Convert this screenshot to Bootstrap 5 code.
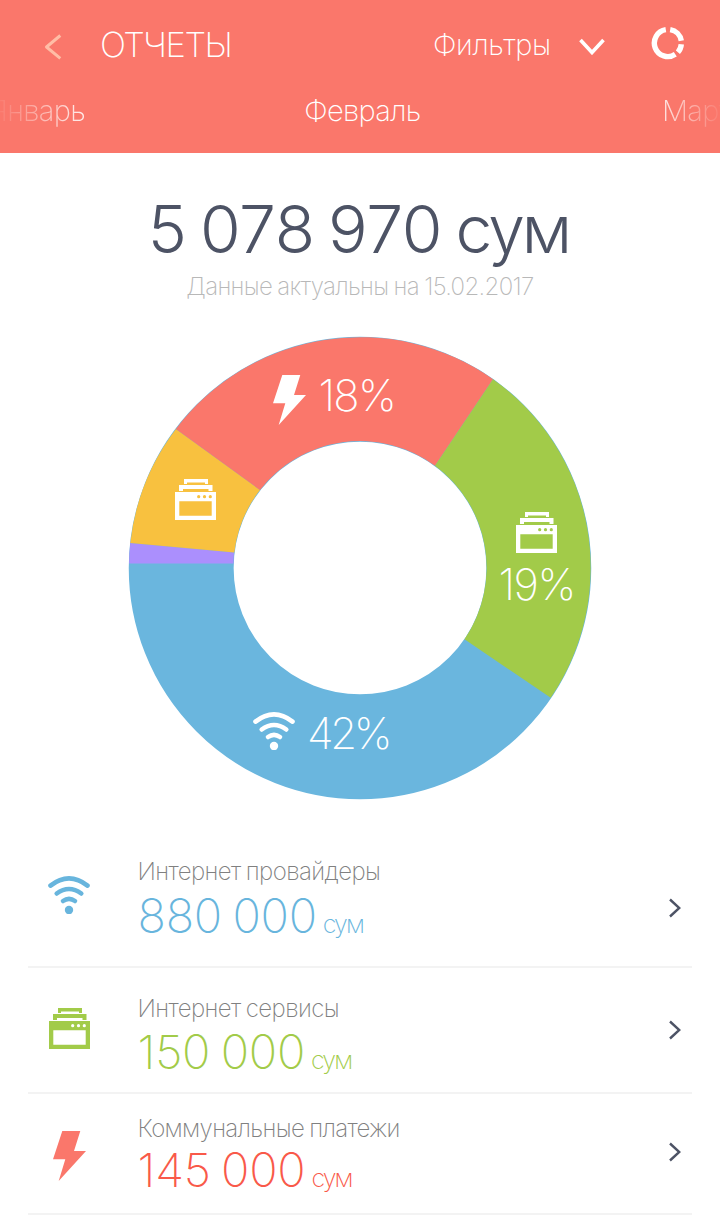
<!DOCTYPE html>
<html lang="ru">
<head>
<meta charset="utf-8">
<meta name="viewport" content="width=device-width, initial-scale=1">
<title>Отчеты</title>
<link rel="stylesheet" href="https://cdn.jsdelivr.net/npm/bootstrap@5.3.0/dist/css/bootstrap.min.css">
<style>
body{font-family:Inter,"Open Sans",sans-serif;font-weight:245;background:#fff;color:#4d5365;overflow:hidden}
svg{display:block}
.topbar{height:153px;background:#fa776b}
.title-row{height:89px;padding-left:44px;padding-right:35px}
.back-btn{margin-top:4px}
.page-title{font-size:34.5px;line-height:1;font-weight:245;letter-spacing:-1.5px;margin-left:38px;padding-top:2px}
.filters{font-size:29px;line-height:1;letter-spacing:-.3px}
.filters-arrow{margin:4px 46px 0 28px}
.months{height:43px;font-size:29px;line-height:43px;letter-spacing:-.65px}
.month-side{width:120px;overflow:hidden;white-space:nowrap}
.month-current{padding-left:5px}
.month-prev{direction:rtl;padding-right:35px;-webkit-mask-image:linear-gradient(90deg,rgba(0,0,0,.05),rgba(0,0,0,.85) 80px);mask-image:linear-gradient(90deg,rgba(0,0,0,.05),rgba(0,0,0,.85) 80px)}
.month-next{padding-left:62px;-webkit-mask-image:linear-gradient(270deg,rgba(0,0,0,.05),rgba(0,0,0,.85) 60px);mask-image:linear-gradient(270deg,rgba(0,0,0,.05),rgba(0,0,0,.85) 60px)}
.total{font-size:66px;line-height:81px;font-weight:300;letter-spacing:-.3px;word-spacing:-5px;padding-top:36px;padding-right:3px}
.total-unit{letter-spacing:-3px}
.updated{font-size:24px;line-height:32px;color:#b8b8b8;letter-spacing:-.65px;word-spacing:-1px;padding-top:1px;margin-bottom:-1px}
.chart{margin:34px auto 0}
.chart text{font-size:43.5px;fill:#fff}
.entry{margin:0 28px;border-bottom:2px solid #f3f3f3}
.entry-icon{width:42px;margin-left:20px}
.entry-text{margin-left:47.5px}
.entry-label{font-size:24px;line-height:32px;color:#808080;letter-spacing:-.58px;word-spacing:-1px}
.entry-3 .entry-label{letter-spacing:-.65px}
.entry-sum{font-size:47px;word-spacing:-2.5px;letter-spacing:-.25px}
.unit{font-size:25px;letter-spacing:-1.9px;margin-left:6px}
.entry-arrow{margin-right:11.5px}
.entry-1{height:168px;padding-top:56px}
.entry-1 .entry-icon{padding-top:20px}
.entry-1 .entry-sum{line-height:56px;color:#68b5dd}
.entry-1 .entry-arrow{padding-top:42px}
.entry-2{height:126px;padding-top:25px}
.entry-2 .entry-icon{padding-top:15px}
.entry-2 .entry-sum{line-height:54px;color:#a2cb49}
.entry-2 .entry-arrow{padding-top:27px}
.entry-3{height:121px;padding-top:19px}
.entry-3 .entry-icon{padding-top:18px}
.entry-3 .entry-sum{line-height:50px;color:#f95949}
.entry-3 .entry-arrow{padding-top:29px}
</style>
</head>
<body>
<svg width="0" height="0" class="position-absolute">
<defs>
<symbol id="wifi" viewBox="0 0 42 38"><g fill="none" stroke="currentColor" stroke-width="4.600" stroke-linecap="round"><path d="M2.500 9.600Q21-4.800 39.500 9.600"/><path d="M8.700 17.500Q21 8.500 33.300 17.500"/><path d="M15 25Q21 20.600 27 25"/></g><circle cx="21" cy="34" r="4.200" fill="currentColor"/></symbol>
<symbol id="stove" viewBox="0 0 41 41"><path fill="currentColor" fill-rule="evenodd" d="M9 0h24v5h-3V3.500H12V5H9zM4 6h33.500v6H33.500v-2H8v2H4zM0 13h41v28H0zM4.300 22.200v14.500h32.400V22.200z"/><circle cx="23.700" cy="17.700" r="1.600"/><circle cx="29.500" cy="17.700" r="1.600"/><circle cx="35.300" cy="17.700" r="1.600"/></symbol>
<symbol id="bolt" viewBox="0 0 33 50"><path fill="currentColor" d="M9.300 0H27.300L21 20H33L5.700 50 12.300 28.300H0z"/></symbol>
<symbol id="next" viewBox="0 0 12 20"><path fill="none" stroke="#4d5365" stroke-width="2.400" d="M1 1.500L10.300 10 1 18.500"/></symbol>
</defs>
</svg>

<header class="topbar text-white">
  <div class="title-row d-flex align-items-center">
    <svg class="back-btn" width="18" height="26" viewBox="0 0 18 26"><path d="M16.300 1.500L2.500 13 16.300 24.300" fill="none" stroke="#ffbda6" stroke-width="3" stroke-linejoin="round"/></svg>
    <h1 class="page-title mb-0">ОТЧЕТЫ</h1>
    <span class="filters ms-auto">Фильтры</span>
    <svg class="filters-arrow" width="26" height="17" viewBox="0 0 26 17"><path d="M1.500 2L13 14.500 24.500 2" fill="none" stroke="#fff" stroke-width="3.600"/></svg>
    <svg class="mb-1" width="34" height="34" viewBox="-17 -17 34 34"><g fill="none" stroke="#fff" stroke-width="5.400"><path d="M2.200-13.300A13.500 13.500 0 0 1 13.300-2.200M13.300 1.200A13.500 13.500 0 0 1 9.900 9.200M7.300 11.300A13.500 13.500 0 1 1-2.200-13.300"/></g></svg>
  </div>
  <nav class="months d-flex justify-content-between">
    <span class="month-side month-prev">Январь</span>
    <span class="month-current">Февраль</span>
    <span class="month-side month-next">Март</span>
  </nav>
</header>

<main>
  <div class="total text-center">5 078 970 <span class="total-unit">сум</span></div>
  <div class="updated text-center">Данные актуальны на 15.02.2017</div>

  <svg class="chart" width="464" height="464" viewBox="128 336 464 464">
    <circle cx="360" cy="568" r="178.800" fill="none" stroke="#6ab6de" stroke-width="104.900"/>
    <path fill="#ab8ffd" d="M129.100 563.500A231 231 0 0 1 130.300 543L234 552.500A126.500 126.500 0 0 0 233.500 563.500z"/>
    <path fill="#f8c13f" d="M130.300 543A231 231 0 0 1 175.900 428.900L260 490A126.500 126.500 0 0 0 234.300 552.500z"/>
    <path fill="#fa776b" d="M175.900 428.900A231 231 0 0 1 493 379.200L435 465.800A126.500 126.500 0 0 0 260 490z"/>
    <path fill="#a2cb49" d="M493 379.200A231 231 0 0 1 550.700 697.800L464.500 639.200A126.500 126.500 0 0 0 435 465.800z"/>
    <g color="#fff">
      <use href="#bolt" x="273" y="375" width="33" height="50"/>
      <use href="#stove" x="175" y="479" width="41" height="41" fill="#f8c13f"/>
      <use href="#stove" x="516" y="512" width="41" height="41" fill="#a2cb49"/>
      <use href="#wifi" x="253" y="712" width="42" height="38"/>
    </g>
    <text x="318.500" y="411" letter-spacing="-1.700">18%</text>
    <text x="498.500" y="599.500" letter-spacing="-1.500">19%</text>
    <text x="307" y="749" letter-spacing="-3.300">42%</text>
  </svg>

  <div class="entry entry-1 d-flex align-items-start">
    <div class="entry-icon" style="color:#68b5dd"><svg width="42" height="38"><use href="#wifi"/></svg></div>
    <div class="entry-text flex-grow-1">
      <div class="entry-label">Интернет провайдеры</div>
      <div class="entry-sum">880 000<span class="unit">сум</span></div>
    </div>
    <div class="entry-arrow"><svg width="12" height="20"><use href="#next"/></svg></div>
  </div>
  <div class="entry entry-2 d-flex align-items-start">
    <div class="entry-icon" style="color:#a2cb49"><svg width="42" height="41" fill="#fff"><use href="#stove" x="1" width="41" height="41"/></svg></div>
    <div class="entry-text flex-grow-1">
      <div class="entry-label">Интернет сервисы</div>
      <div class="entry-sum">150 000<span class="unit">сум</span></div>
    </div>
    <div class="entry-arrow"><svg width="12" height="20"><use href="#next"/></svg></div>
  </div>
  <div class="entry entry-3 d-flex align-items-start">
    <div class="entry-icon" style="color:#fa776b"><svg width="42" height="50"><use href="#bolt" x="5" width="33" height="50"/></svg></div>
    <div class="entry-text flex-grow-1">
      <div class="entry-label">Коммунальные платежи</div>
      <div class="entry-sum">145 000<span class="unit">сум</span></div>
    </div>
    <div class="entry-arrow"><svg width="12" height="20"><use href="#next"/></svg></div>
  </div>
</main>
<script src="https://cdn.jsdelivr.net/npm/bootstrap@5.3.0/dist/js/bootstrap.bundle.min.js"></script>
</body>
</html>
